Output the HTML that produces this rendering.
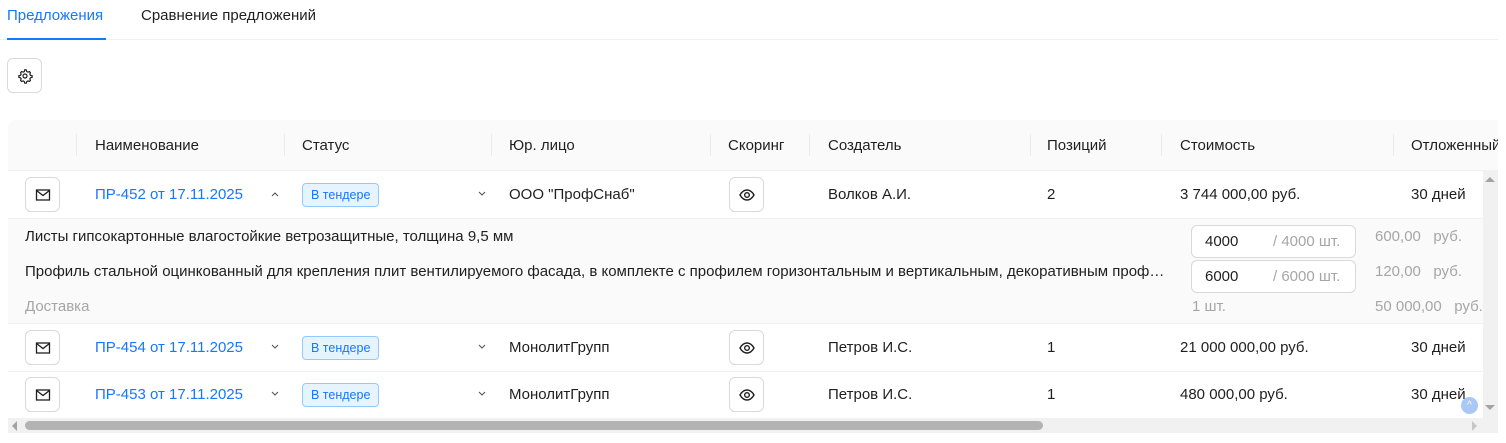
<!DOCTYPE html>
<html><head><meta charset="utf-8">
<style>
*{box-sizing:border-box;margin:0;padding:0}
body{width:1506px;height:443px;background:#fff;font-family:"Liberation Sans","DejaVu Sans",sans-serif;font-size:15px;color:#1f1f1f;position:relative;overflow:hidden}
.a{position:absolute;white-space:nowrap}
.btn{position:absolute;width:35px;height:35px;border:1px solid #d9d9d9;border-radius:6px;background:#fff;display:flex;align-items:center;justify-content:center}
.tag{position:absolute;height:24px;padding:0 8px;border:1px solid #91caff;background:#e6f4ff;color:#1677ff;border-radius:4px;font-size:12.5px;line-height:22px}
.link{color:#1677ff}
.sep{position:absolute;width:1px;height:22px;top:134px;background:#ececec}
.hl{position:absolute;left:8px;width:1475px;height:1px;background:#f0f0f0}
.inp{position:absolute;width:165px;height:33px;border:1px solid #d9d9d9;border-radius:6px;background:#fff}
.g{color:#a6a6a6}
</style></head><body>
<div class="a" style="left:7px;top:7px;color:#1677ff;font-size:15px">Предложения</div>
<div class="a" style="left:141px;top:7px;font-size:15px">Сравнение предложений</div>
<div class="a" style="left:0;top:39px;width:1498px;height:1px;background:#f0f0f0"></div>
<div class="a" style="left:7px;top:38px;width:99px;height:2px;background:#1677ff"></div>

<div class="btn" style="left:7px;top:58px;width:35px;height:35px">
<svg width="16" height="16" viewBox="0 0 24 24" fill="none" stroke="#1f1f1f" stroke-width="1.8"><circle cx="12" cy="12" r="3"/><path d="M12 2.5l2 .3.6 2.4 1.7 1 2.4-.8 1.4 1.5-.8 2.4 1 1.7 2.4.6v2.4l-2.4.6-1 1.7.8 2.4-1.4 1.5-2.4-.8-1.7 1-.6 2.4h-2.4l-.6-2.4-1.7-1-2.4.8-1.5-1.5.8-2.4-1-1.7-2.4-.6v-2.4l2.4-.6 1-1.7-.8-2.4 1.5-1.5 2.4.8 1.7-1 .6-2.4z"/></svg></div>

<div class="a" style="left:8px;top:120px;width:1490px;height:50px;background:#fafafa;border-radius:8px 0 0 0"></div>
<div class="sep" style="left:76px"></div><div class="sep" style="left:284px"></div><div class="sep" style="left:491px"></div><div class="sep" style="left:710px"></div><div class="sep" style="left:809px"></div><div class="sep" style="left:1030px"></div><div class="sep" style="left:1161px"></div><div class="sep" style="left:1393px"></div>
<div class="a" style="left:95px;top:137px">Наименование</div>
<div class="a" style="left:302px;top:137px">Статус</div>
<div class="a" style="left:509px;top:137px">Юр. лицо</div>
<div class="a" style="left:728px;top:137px">Скоринг</div>
<div class="a" style="left:828px;top:137px">Создатель</div>
<div class="a" style="left:1047px;top:137px">Позиций</div>
<div class="a" style="left:1180px;top:137px">Стоимость</div>
<div class="a" style="left:1411px;top:137px;width:87px;overflow:hidden">Отложенный</div>
<div class="hl" style="top:170px"></div>

<div class="a" style="left:8px;top:218px;width:1475px;height:105px;background:#fafafa"></div>
<div class="hl" style="top:218px"></div><div class="hl" style="top:323px"></div><div class="hl" style="top:371px"></div>

<div class="btn" style="left:25px;top:177px"><svg width="16" height="14" viewBox="0 0 16 14" fill="none" stroke="#1f1f1f" stroke-width="1.3"><rect x="1.5" y="2" width="13" height="10"/><path d="M1.5 2.5l6.5 5 6.5-5"/></svg></div>
<div class="a link" style="left:95px;top:186px">ПР-452 от 17.11.2025</div>
<svg class="a" style="left:270px;top:190px" width="10" height="8" viewBox="0 0 10 8" fill="none" stroke="#555" stroke-width="1.1"><path d="M2 6l3-3 3 3"/></svg>
<div class="tag" style="left:302px;top:183px">В тендере</div>
<svg class="a" style="left:477px;top:190px" width="10" height="8" viewBox="0 0 10 8" fill="none" stroke="#555" stroke-width="1.1"><path d="M2 2l3 3 3-3"/></svg>
<div class="a" style="left:509px;top:186px">ООО "ПрофСнаб"</div>
<div class="btn" style="left:729px;top:177px"><svg width="16" height="12" viewBox="0 0 16 12" fill="none" stroke="#1f1f1f" stroke-width="1.4"><path d="M1 6c2-3.5 4.5-5 7-5s5 1.5 7 5c-2 3.5-4.5 5-7 5S3 9.5 1 6z"/><circle cx="8" cy="6" r="2.3"/></svg></div>
<div class="a" style="left:828px;top:186px">Волков А.И.</div>
<div class="a" style="left:1047px;top:186px">2</div>
<div class="a" style="left:1180px;top:186px">3 744 000,00 руб.</div>
<div class="a" style="left:1411px;top:186px">30 дней</div>

<div class="a" style="left:25px;top:228px">Листы гипсокартонные влагостойкие ветрозащитные, толщина 9,5 мм</div>
<div class="a" style="left:25px;top:263px;width:1143px;overflow:hidden;text-overflow:ellipsis">Профиль стальной оцинкованный для крепления плит вентилируемого фасада, в комплекте с профилем горизонтальным и вертикальным, декоративным профилем</div>
<div class="a g" style="left:25px;top:298px">Доставка</div>
<div class="inp" style="left:1191px;top:225px"></div>
<div class="a" style="left:1205px;top:233px">4000</div>
<div class="a g" style="left:1273px;top:233px">/ 4000 шт.</div>
<div class="inp" style="left:1191px;top:260px"></div>
<div class="a" style="left:1205px;top:268px">6000</div>
<div class="a g" style="left:1273px;top:268px">/ 6000 шт.</div>
<div class="a g" style="left:1192px;top:298px">1 шт.</div>
<div class="a g" style="left:1375px;top:228px">600,00 &nbsp; руб.</div>
<div class="a g" style="left:1375px;top:263px">120,00 &nbsp; руб.</div>
<div class="a g" style="left:1375px;top:298px">50 000,00 &nbsp; руб.</div>

<div class="btn" style="left:25px;top:330px"><svg width="16" height="14" viewBox="0 0 16 14" fill="none" stroke="#1f1f1f" stroke-width="1.3"><rect x="1.5" y="2" width="13" height="10"/><path d="M1.5 2.5l6.5 5 6.5-5"/></svg></div>
<div class="a link" style="left:95px;top:339px">ПР-454 от 17.11.2025</div>
<svg class="a" style="left:270px;top:343px" width="10" height="8" viewBox="0 0 10 8" fill="none" stroke="#555" stroke-width="1.1"><path d="M2 2l3 3 3-3"/></svg>
<div class="tag" style="left:302px;top:336px">В тендере</div>
<svg class="a" style="left:477px;top:343px" width="10" height="8" viewBox="0 0 10 8" fill="none" stroke="#555" stroke-width="1.1"><path d="M2 2l3 3 3-3"/></svg>
<div class="a" style="left:509px;top:339px">МонолитГрупп</div>
<div class="btn" style="left:729px;top:330px"><svg width="16" height="12" viewBox="0 0 16 12" fill="none" stroke="#1f1f1f" stroke-width="1.4"><path d="M1 6c2-3.5 4.5-5 7-5s5 1.5 7 5c-2 3.5-4.5 5-7 5S3 9.5 1 6z"/><circle cx="8" cy="6" r="2.3"/></svg></div>
<div class="a" style="left:828px;top:339px">Петров И.С.</div>
<div class="a" style="left:1047px;top:339px">1</div>
<div class="a" style="left:1180px;top:339px">21 000 000,00 руб.</div>
<div class="a" style="left:1411px;top:339px">30 дней</div>

<div class="btn" style="left:25px;top:377px"><svg width="16" height="14" viewBox="0 0 16 14" fill="none" stroke="#1f1f1f" stroke-width="1.3"><rect x="1.5" y="2" width="13" height="10"/><path d="M1.5 2.5l6.5 5 6.5-5"/></svg></div>
<div class="a link" style="left:95px;top:386px">ПР-453 от 17.11.2025</div>
<svg class="a" style="left:270px;top:390px" width="10" height="8" viewBox="0 0 10 8" fill="none" stroke="#555" stroke-width="1.1"><path d="M2 2l3 3 3-3"/></svg>
<div class="tag" style="left:302px;top:383px">В тендере</div>
<svg class="a" style="left:477px;top:390px" width="10" height="8" viewBox="0 0 10 8" fill="none" stroke="#555" stroke-width="1.1"><path d="M2 2l3 3 3-3"/></svg>
<div class="a" style="left:509px;top:386px">МонолитГрупп</div>
<div class="btn" style="left:729px;top:377px"><svg width="16" height="12" viewBox="0 0 16 12" fill="none" stroke="#1f1f1f" stroke-width="1.4"><path d="M1 6c2-3.5 4.5-5 7-5s5 1.5 7 5c-2 3.5-4.5 5-7 5S3 9.5 1 6z"/><circle cx="8" cy="6" r="2.3"/></svg></div>
<div class="a" style="left:828px;top:386px">Петров И.С.</div>
<div class="a" style="left:1047px;top:386px">1</div>
<div class="a" style="left:1180px;top:386px">480 000,00 руб.</div>
<div class="a" style="left:1411px;top:386px">30 дней</div>

<div class="a" style="left:1461px;top:397px;width:17px;height:17px;border-radius:50%;background:#a9c8f5;color:#fff;font-size:10px;line-height:17px;text-align:center">^</div>

<div class="a" style="left:1483px;top:170px;width:15px;height:248px;background:#f1f1f1"></div>
<svg class="a" style="left:1485px;top:176px" width="10" height="6"><path d="M0 6L5 1 10 6z" fill="#a3a3a3"/></svg>
<svg class="a" style="left:1485px;top:405px" width="10" height="6"><path d="M0 0L5 5 10 0z" fill="#a3a3a3"/></svg>
<div class="a" style="left:8px;top:418px;width:1490px;height:15px;background:#f1f1f1"></div>
<svg class="a" style="left:11px;top:421px" width="6" height="10"><path d="M6 0L1 5 6 10z" fill="#a3a3a3"/></svg>
<svg class="a" style="left:1472px;top:421px" width="6" height="10"><path d="M0 0L5 5 0 10z" fill="#c6c6c6"/></svg>
<div class="a" style="left:25px;top:421px;width:1018px;height:9px;border-radius:5px;background:#b3b3b3"></div>
</body></html>
